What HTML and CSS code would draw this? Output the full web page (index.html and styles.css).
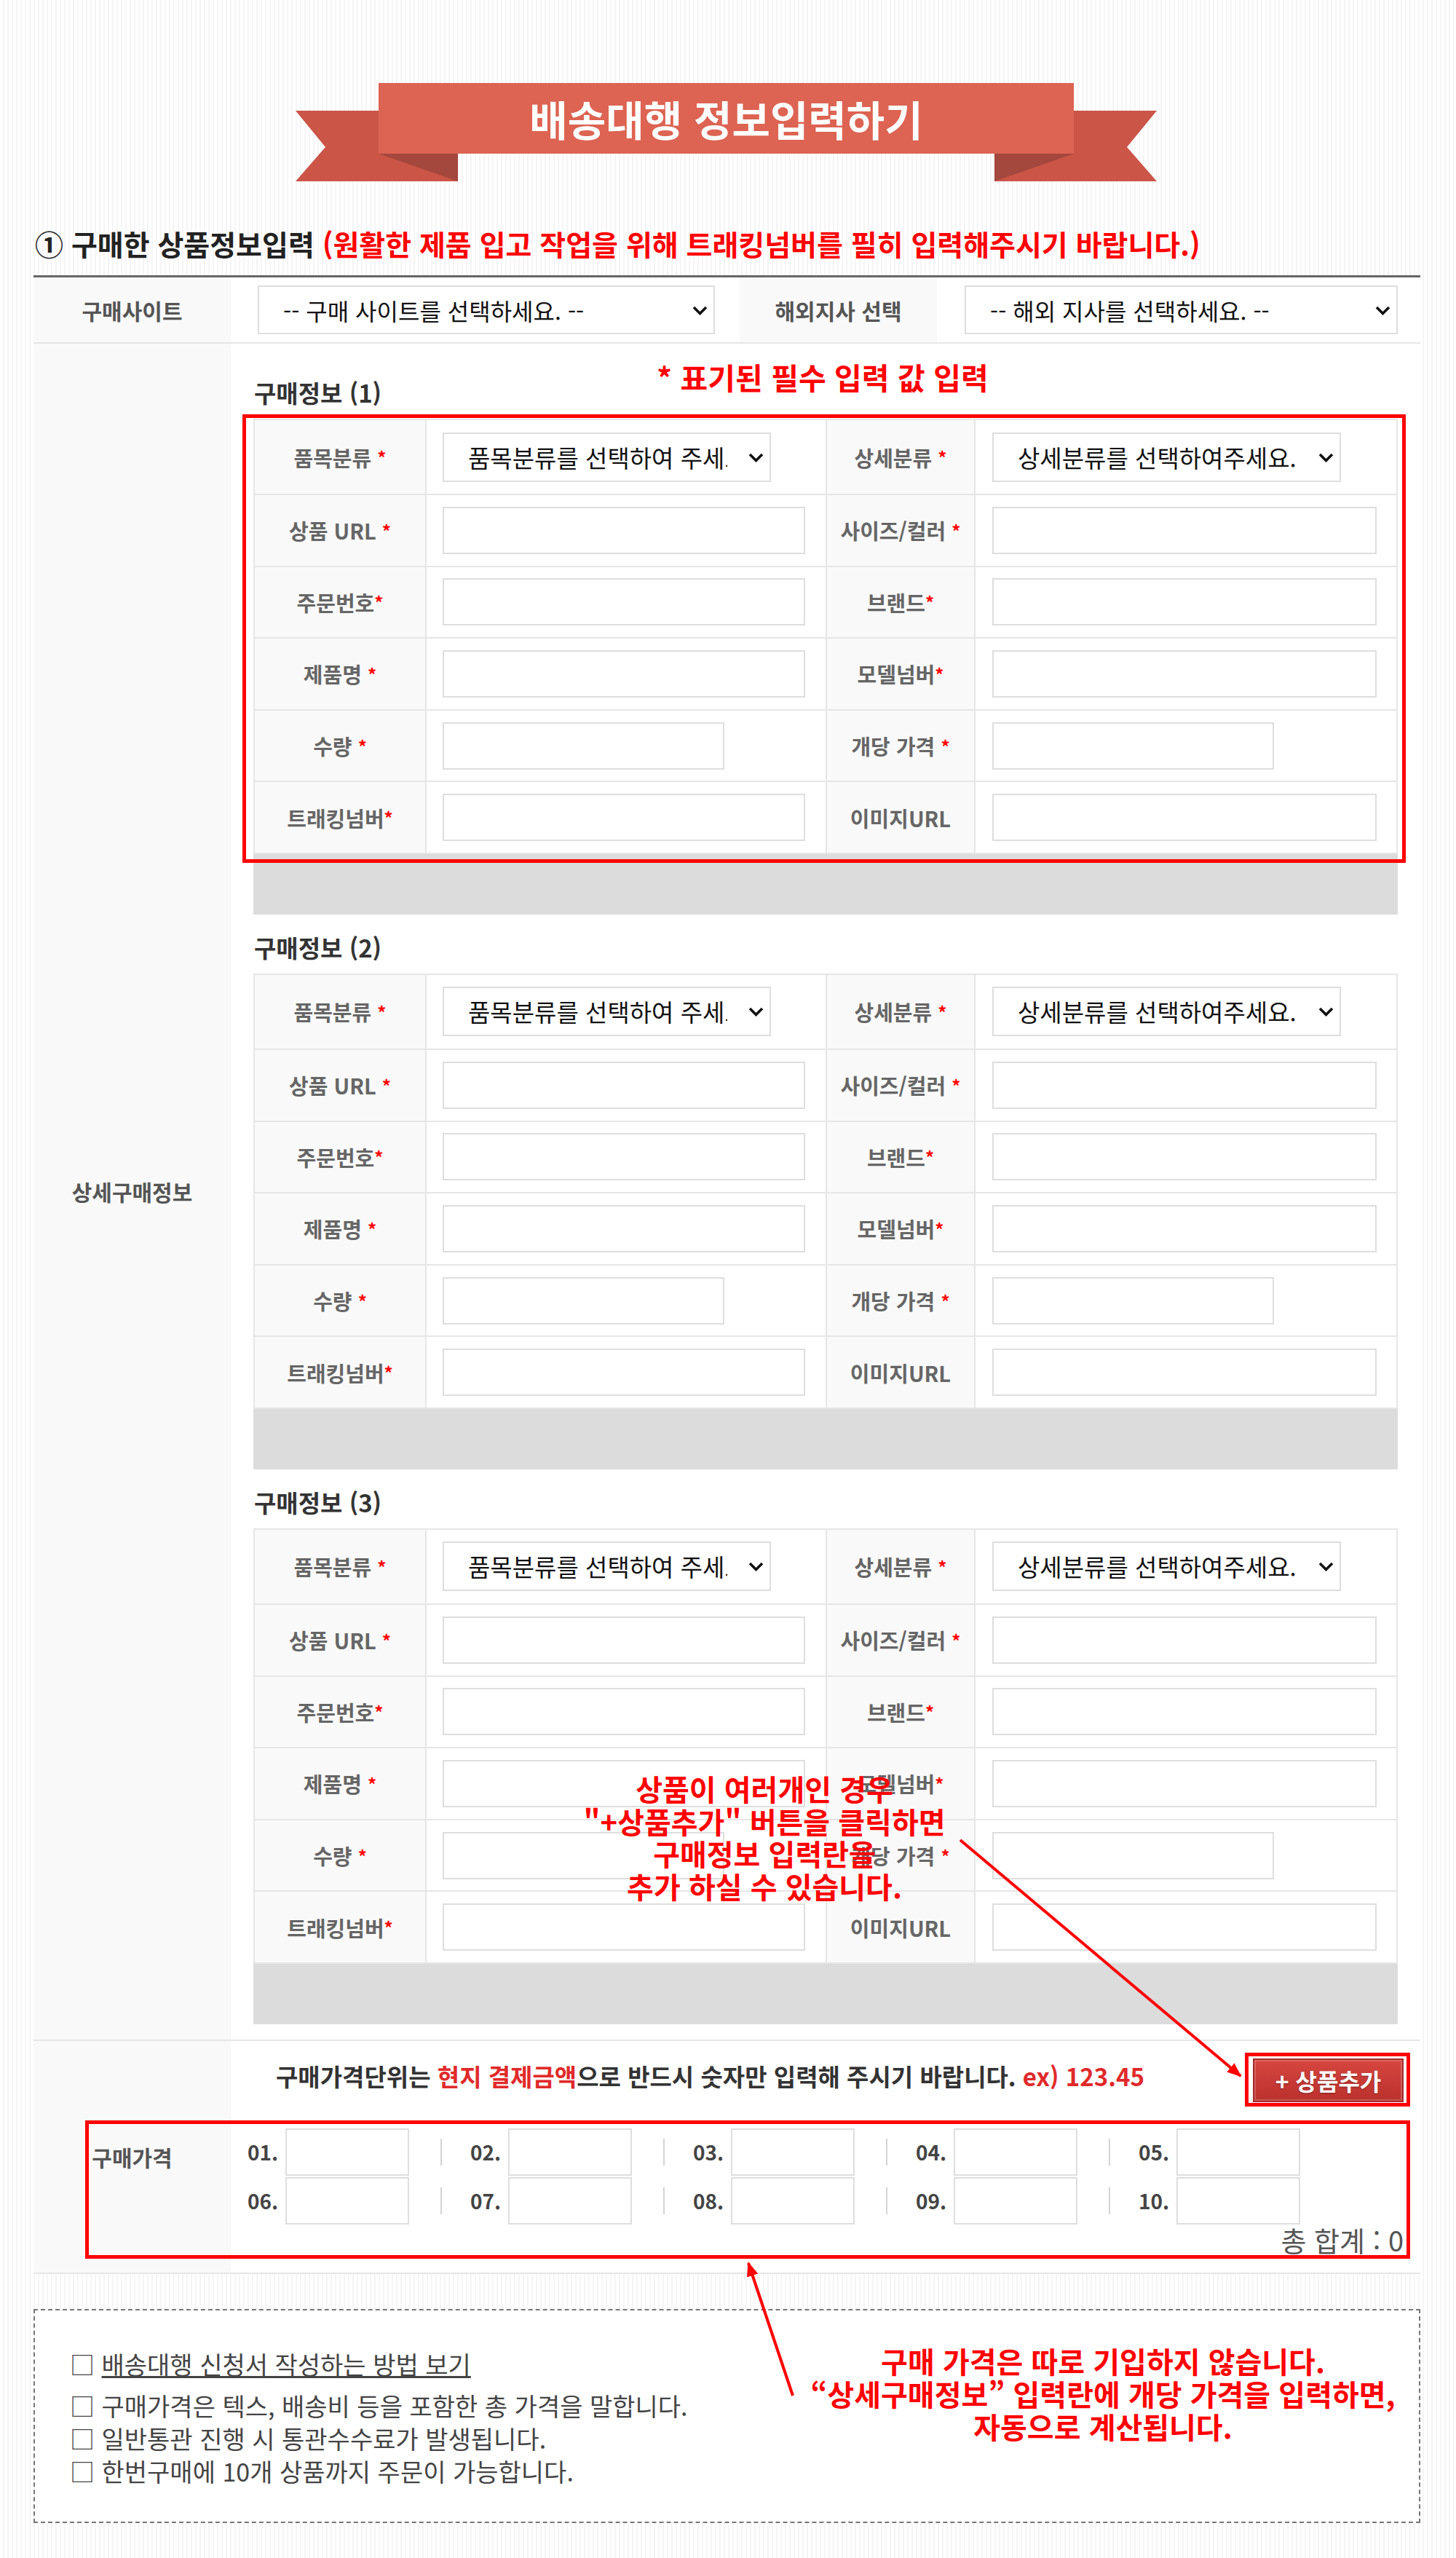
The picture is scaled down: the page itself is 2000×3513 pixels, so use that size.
FILE: index.html
```html
<!DOCTYPE html>
<html lang="ko">
<head>
  <meta charset="utf-8">
  <title>배송대행 정보입력하기</title>
  <link rel="stylesheet" href="styles.css">
</head>
<body>
<div id="wrap">

  <div class="banner">
    <svg class="ribbon" width="1183" height="135" viewBox="0 0 1183 135">
      <polygon points="0,38 223,38 223,135 0,135 41,88" fill="#cb5547"/>
      <polygon points="960,38 1183,38 1142,88 1183,135 960,135" fill="#cb5547"/>
      <polygon points="114,97 223,97 223,135" fill="#a4473c"/>
      <polygon points="960,97 1069,97 960,135" fill="#a4473c"/>
      <rect x="114" y="0" width="955" height="97" fill="#dd6352"/>
    </svg>
    <h1 class="banner_title">배송대행 정보입력하기</h1>
  </div>

  <h2 class="sec_title">① 구매한 상품정보입력 <span class="red">(원활한 제품 입고 작업을 위해 트래킹넘버를 필히 입력해주시기 바랍니다.)</span></h2>

  <table class="form_tbl">
    <colgroup>
      <col class="c_th">
      <col class="c_site">
      <col class="c_th">
      <col class="c_branch">
    </colgroup>
    <tr class="row_site">
      <th>구매사이트</th>
      <td>
        <span class="sel sel_site">
          <select><option>-- 구매 사이트를 선택하세요. --</option></select>
          <svg class="chev" width="21" height="13" viewBox="0 0 21 13"><path d="M2 2 L10.5 10.5 L19 2" fill="none" stroke="#111" stroke-width="3.6"/></svg>
        </span>
      </td>
      <th>해외지사 선택</th>
      <td class="td_branch">
        <span class="sel sel_branch">
          <select><option>-- 해외 지사를 선택하세요. --</option></select>
          <svg class="chev" width="21" height="13" viewBox="0 0 21 13"><path d="M2 2 L10.5 10.5 L19 2" fill="none" stroke="#111" stroke-width="3.6"/></svg>
        </span>
      </td>
    </tr>

    <tr>
      <th>상세구매정보</th>
      <td colspan="3" class="items_cell">

        <div class="item">
          <h4 class="item_head">구매정보 (1)</h4>
          <div class="item_grid">
            <div class="lbl">품목분류 <em>*</em></div>
            <div class="fld"><span class="sel sel_cat"><select><option>품목분류를 선택하여 주세요.</option></select><svg class="chev" width="21" height="13" viewBox="0 0 21 13"><path d="M2 2 L10.5 10.5 L19 2" fill="none" stroke="#111" stroke-width="3.6"/></svg></span></div>
            <div class="lbl">상세분류 <em>*</em></div>
            <div class="fld fld_r"><span class="sel sel_sub"><select><option>상세분류를 선택하여주세요.</option></select><svg class="chev" width="21" height="13" viewBox="0 0 21 13"><path d="M2 2 L10.5 10.5 L19 2" fill="none" stroke="#111" stroke-width="3.6"/></svg></span></div>

            <div class="lbl">상품 URL <em>*</em></div>
            <div class="fld"><input type="text" class="in_l"></div>
            <div class="lbl">사이즈/컬러 <em>*</em></div>
            <div class="fld fld_r"><input type="text" class="in_r"></div>

            <div class="lbl">주문번호<em>*</em></div>
            <div class="fld"><input type="text" class="in_l"></div>
            <div class="lbl">브랜드<em>*</em></div>
            <div class="fld fld_r"><input type="text" class="in_r"></div>

            <div class="lbl">제품명 <em>*</em></div>
            <div class="fld"><input type="text" class="in_l"></div>
            <div class="lbl">모델넘버<em>*</em></div>
            <div class="fld fld_r"><input type="text" class="in_r"></div>

            <div class="lbl">수량 <em>*</em></div>
            <div class="fld"><input type="text" class="in_s"></div>
            <div class="lbl">개당 가격 <em>*</em></div>
            <div class="fld fld_r"><input type="text" class="in_s"></div>

            <div class="lbl">트래킹넘버<em>*</em></div>
            <div class="fld"><input type="text" class="in_l"></div>
            <div class="lbl">이미지URL</div>
            <div class="fld fld_r"><input type="text" class="in_r"></div>
          </div>
          <div class="item_foot"></div>
        </div>

        <div class="item">
          <h4 class="item_head">구매정보 (2)</h4>
          <div class="item_grid">
            <div class="lbl">품목분류 <em>*</em></div>
            <div class="fld"><span class="sel sel_cat"><select><option>품목분류를 선택하여 주세요.</option></select><svg class="chev" width="21" height="13" viewBox="0 0 21 13"><path d="M2 2 L10.5 10.5 L19 2" fill="none" stroke="#111" stroke-width="3.6"/></svg></span></div>
            <div class="lbl">상세분류 <em>*</em></div>
            <div class="fld fld_r"><span class="sel sel_sub"><select><option>상세분류를 선택하여주세요.</option></select><svg class="chev" width="21" height="13" viewBox="0 0 21 13"><path d="M2 2 L10.5 10.5 L19 2" fill="none" stroke="#111" stroke-width="3.6"/></svg></span></div>

            <div class="lbl">상품 URL <em>*</em></div>
            <div class="fld"><input type="text" class="in_l"></div>
            <div class="lbl">사이즈/컬러 <em>*</em></div>
            <div class="fld fld_r"><input type="text" class="in_r"></div>

            <div class="lbl">주문번호<em>*</em></div>
            <div class="fld"><input type="text" class="in_l"></div>
            <div class="lbl">브랜드<em>*</em></div>
            <div class="fld fld_r"><input type="text" class="in_r"></div>

            <div class="lbl">제품명 <em>*</em></div>
            <div class="fld"><input type="text" class="in_l"></div>
            <div class="lbl">모델넘버<em>*</em></div>
            <div class="fld fld_r"><input type="text" class="in_r"></div>

            <div class="lbl">수량 <em>*</em></div>
            <div class="fld"><input type="text" class="in_s"></div>
            <div class="lbl">개당 가격 <em>*</em></div>
            <div class="fld fld_r"><input type="text" class="in_s"></div>

            <div class="lbl">트래킹넘버<em>*</em></div>
            <div class="fld"><input type="text" class="in_l"></div>
            <div class="lbl">이미지URL</div>
            <div class="fld fld_r"><input type="text" class="in_r"></div>
          </div>
          <div class="item_foot"></div>
        </div>

        <div class="item">
          <h4 class="item_head">구매정보 (3)</h4>
          <div class="item_grid">
            <div class="lbl">품목분류 <em>*</em></div>
            <div class="fld"><span class="sel sel_cat"><select><option>품목분류를 선택하여 주세요.</option></select><svg class="chev" width="21" height="13" viewBox="0 0 21 13"><path d="M2 2 L10.5 10.5 L19 2" fill="none" stroke="#111" stroke-width="3.6"/></svg></span></div>
            <div class="lbl">상세분류 <em>*</em></div>
            <div class="fld fld_r"><span class="sel sel_sub"><select><option>상세분류를 선택하여주세요.</option></select><svg class="chev" width="21" height="13" viewBox="0 0 21 13"><path d="M2 2 L10.5 10.5 L19 2" fill="none" stroke="#111" stroke-width="3.6"/></svg></span></div>

            <div class="lbl">상품 URL <em>*</em></div>
            <div class="fld"><input type="text" class="in_l"></div>
            <div class="lbl">사이즈/컬러 <em>*</em></div>
            <div class="fld fld_r"><input type="text" class="in_r"></div>

            <div class="lbl">주문번호<em>*</em></div>
            <div class="fld"><input type="text" class="in_l"></div>
            <div class="lbl">브랜드<em>*</em></div>
            <div class="fld fld_r"><input type="text" class="in_r"></div>

            <div class="lbl">제품명 <em>*</em></div>
            <div class="fld"><input type="text" class="in_l"></div>
            <div class="lbl">모델넘버<em>*</em></div>
            <div class="fld fld_r"><input type="text" class="in_r"></div>

            <div class="lbl">수량 <em>*</em></div>
            <div class="fld"><input type="text" class="in_s"></div>
            <div class="lbl">개당 가격 <em>*</em></div>
            <div class="fld fld_r"><input type="text" class="in_s"></div>

            <div class="lbl">트래킹넘버<em>*</em></div>
            <div class="fld"><input type="text" class="in_l"></div>
            <div class="lbl">이미지URL</div>
            <div class="fld fld_r"><input type="text" class="in_r"></div>
          </div>
          <div class="item_foot"></div>
        </div>

      </td>
    </tr>

    <tr>
      <th>구매가격</th>
      <td colspan="3" class="price_cell">
        <div class="price_top">
          <p class="price_guide">구매가격단위는 <span class="red2">현지 결제금액</span>으로 반드시 숫자만 입력해 주시기 바랍니다. <span class="red2">ex) 123.45</span></p>
          <button type="button" class="btn_add">+ 상품추가</button>
        </div>
        <div class="price_list">
          <div class="price_row">
            <div class="price_item"><span class="pnum">01.</span><input type="text"></div>
            <div class="price_item"><span class="pnum">02.</span><input type="text"></div>
            <div class="price_item"><span class="pnum">03.</span><input type="text"></div>
            <div class="price_item"><span class="pnum">04.</span><input type="text"></div>
            <div class="price_item"><span class="pnum">05.</span><input type="text"></div>
          </div>
          <div class="price_row">
            <div class="price_item"><span class="pnum">06.</span><input type="text"></div>
            <div class="price_item"><span class="pnum">07.</span><input type="text"></div>
            <div class="price_item"><span class="pnum">08.</span><input type="text"></div>
            <div class="price_item"><span class="pnum">09.</span><input type="text"></div>
            <div class="price_item"><span class="pnum">10.</span><input type="text"></div>
          </div>
        </div>
        <p class="price_total">총 합계 : 0</p>
      </td>
    </tr>
  </table>

  <div class="notice">
    <ul>
      <li class="first">□ <a href="#">배송대행 신청서 작성하는 방법 보기</a></li>
      <li>□ 구매가격은 텍스, 배송비 등을 포함한 총 가격을 말합니다.</li>
      <li>□ 일반통관 진행 시 통관수수료가 발생됩니다.</li>
      <li>□ 한번구매에 10개 상품까지 주문이 가능합니다.</li>
    </ul>
  </div>

  <!-- guide marks drawn over the form -->
  <p class="mark mark_req">* 표기된 필수 입력 값 입력</p>
  <div class="box box_item"></div>
  <p class="mark mark_add">상품이 여러개인 경우<br>"+상품추가" 버튼을 클릭하면<br>구매정보 입력란을<br>추가 하실 수 있습니다.</p>
  <div class="box box_btn"></div>
  <div class="box box_price"></div>
  <p class="mark mark_price">구매 가격은 따로 기입하지 않습니다.<br>“상세구매정보” 입력란에 개당 가격을 입력하면,<br>자동으로 계산됩니다.</p>
  <svg class="arrows" width="1905" height="3513" viewBox="0 0 1905 3513">
    <defs>
      <marker id="head" markerWidth="5" markerHeight="4" refX="4.5" refY="2" orient="auto" markerUnits="strokeWidth">
        <path d="M0,0 L5,2 L0,4 Z" fill="#ff0000"/>
      </marker>
    </defs>
    <line x1="1273" y1="2527" x2="1658" y2="2851" stroke="#ff0000" stroke-width="4" marker-end="url(#head)"/>
    <line x1="1043" y1="3290" x2="982" y2="3108" stroke="#ff0000" stroke-width="4" marker-end="url(#head)"/>
  </svg>

</div>
</body>
</html>
```

FILE: styles.css
```css
body {
  margin: 0;
  background: repeating-linear-gradient(90deg, #ffffff 0, #ffffff 4px, #f5f5f5 4px, #f5f5f5 6px);
  font-family: "Noto Sans CJK KR", "Noto Sans", sans-serif;
  color: #333;
}

#wrap {
  position: relative;
  width: 1905px;
  margin-left: 46px;
  padding-top: 114px;
  padding-bottom: 48px;
}

.red {
  color: #ff0000;
}

.red2 {
  color: #e02a2a;
}

/* title ribbon */
.banner {
  position: relative;
  width: 1183px;
  height: 135px;
  margin-left: 360px;
}

.ribbon {
  position: absolute;
  left: 0;
  top: 0;
}

.banner_title {
  position: relative;
  width: 955px;
  margin: 0 0 0 114px;
  line-height: 97px;
  text-align: center;
  color: #fff;
  font-size: 57px;
  font-weight: bold;
}

.sec_title {
  margin: 62px 0 21px 2px;
  font-size: 39px;
  line-height: 46px;
  color: #222;
  font-weight: bold;
  white-space: nowrap;
}

/* main form table */
.form_tbl {
  width: 1905px;
  table-layout: fixed;
  border-collapse: separate;
  border-spacing: 0;
  background: #fff;
  border-top: 3px solid #666;
}

.c_th {
  width: 271px;
}

.c_site {
  width: 699px;
}

.c_branch {
  width: 664px;
}

.form_tbl th {
  background: #f9f9f9;
  font-size: 30px;
  font-weight: bold;
  color: #555;
  border-bottom: 2px solid #e6e6e6;
  vertical-align: middle;
}

.form_tbl td {
  border-bottom: 2px solid #e6e6e6;
}

.row_site th,
.row_site td {
  padding: 11px 0;
}

.row_site td {
  padding-left: 37px;
}

.row_site td.td_branch {
  padding-left: 38px;
}

/* selects */
.sel {
  position: relative;
  display: inline-block;
  vertical-align: middle;
}

.sel select {
  appearance: none;
  -webkit-appearance: none;
  display: block;
  height: 67px;
  padding: 0 40px 0 33px;
  border: 2px solid #dedede;
  background: #fff;
  font-family: inherit;
  font-size: 32px;
  color: #111;
  border-radius: 0;
}

.sel .chev {
  position: absolute;
  right: 10px;
  top: 50%;
  margin-top: -6px;
}

.sel_site select {
  width: 628px;
}

.sel_branch select {
  width: 595px;
}

.sel_cat select {
  width: 451px;
  height: 68px;
  padding-right: 58px;
  font-size: 33px;
}

.sel_sub select {
  width: 479px;
  height: 68px;
  font-size: 33px;
}

/* product blocks */
.items_cell {
  padding: 22px 31px 21px;
}

.item_head {
  margin: 0;
  padding: 25px 0 16px 1px;
  font-size: 33px;
  line-height: 40px;
  color: #333;
  font-weight: bold;
}

.item_grid {
  display: grid;
  grid-template-columns: 234px 548px 202px 578px;
  grid-template-rows: 101px repeat(5, 96.6px);
  gap: 2px;
  padding: 2px;
  background: #e6e6e6;
}

.item_grid .lbl {
  display: flex;
  align-items: center;
  justify-content: center;
  background: #f9f9f9;
  font-size: 29px;
  font-weight: bold;
  color: #666;
  white-space: pre;
}

.item_grid .lbl em {
  font-style: normal;
  color: #ff0000;
  font-size: 24px;
}

.item_grid .fld {
  display: flex;
  align-items: center;
  padding-left: 22px;
  background: #fff;
}

.item_grid .fld_r {
  padding-left: 23px;
}

input[type="text"] {
  box-sizing: border-box;
  height: 65px;
  border: 2px solid #dedede;
  background: #fff;
  font-family: inherit;
  font-size: 28px;
  padding: 0 10px;
}

.in_l {
  width: 498px;
}

.in_r {
  width: 528px;
}

.in_s {
  width: 387px;
}

.item_foot {
  height: 83px;
  background: #dcdcdc;
}

/* price row */
.price_cell {
  padding: 24px 23px 25px;
}

.price_top {
  display: flex;
  align-items: center;
  height: 60px;
}

.price_guide {
  margin: -12px 0 0 0;
  padding-left: 39px;
  font-size: 33px;
  font-weight: bold;
  color: #333;
  white-space: nowrap;
}

.btn_add {
  margin-left: auto;
  width: 207px;
  height: 60px;
  border: 2px solid #a52b2b;
  background: linear-gradient(to bottom, #d6463f, #bb302d);
  box-shadow: inset 0 0 0 2px rgba(255, 255, 255, 0.18);
  color: #fff;
  font-family: inherit;
  font-size: 32px;
  font-weight: bold;
  text-shadow: 0 1px 2px rgba(0, 0, 0, 0.35);
  padding: 0;
}

.price_list {
  margin-top: 36px;
}

.price_row {
  display: flex;
  align-items: center;
  height: 65px;
}

.price_row + .price_row {
  margin-top: 2px;
}

.price_item {
  display: flex;
  align-items: center;
}

.price_item + .price_item::before {
  content: "";
  width: 2px;
  height: 37px;
  background: #d4d4d4;
  margin: 0 39px 0 43px;
}

.pnum {
  width: 52px;
  font-size: 28px;
  font-weight: bold;
  color: #444;
}

.price_item input {
  width: 170px;
}

.price_total {
  margin: 1px 0 0 0;
  text-align: right;
  font-size: 38px;
  line-height: 40px;
  color: #555;
}

/* notice */
.notice {
  margin-top: 48px;
  padding: 51px 48px 47px;
  border: 2px dashed #777;
  background: #fff;
  font-size: 34px;
  line-height: 45px;
  color: #444;
}

.notice ul {
  margin: 0;
  padding: 0;
  list-style: none;
}

.notice li.first {
  margin-bottom: 12px;
}

.notice a {
  color: #444;
  text-decoration: underline;
}

/* guide marks */
.mark {
  position: absolute;
  margin: 0;
  color: #ff0000;
  font-weight: bold;
  text-align: center;
  white-space: nowrap;
}

.mark_req {
  left: 684px;
  top: 495px;
  width: 800px;
  font-size: 41px;
  line-height: 44px;
}

.mark_add {
  left: 654px;
  top: 2434px;
  width: 700px;
  font-size: 40px;
  line-height: 44.5px;
}

.mark_price {
  left: 1019px;
  top: 3220px;
  width: 900px;
  font-size: 40px;
  line-height: 45px;
}

.box {
  position: absolute;
  box-sizing: border-box;
  border: 5px solid #ff0000;
}

.box_item {
  left: 287px;
  top: 569px;
  width: 1598px;
  height: 616px;
}

.box_btn {
  left: 1664px;
  top: 2819px;
  width: 227px;
  height: 74px;
}

.box_price {
  left: 71px;
  top: 2912px;
  width: 1820px;
  height: 190px;
}

.arrows {
  position: absolute;
  left: 0;
  top: 0;
  pointer-events: none;
}
```
